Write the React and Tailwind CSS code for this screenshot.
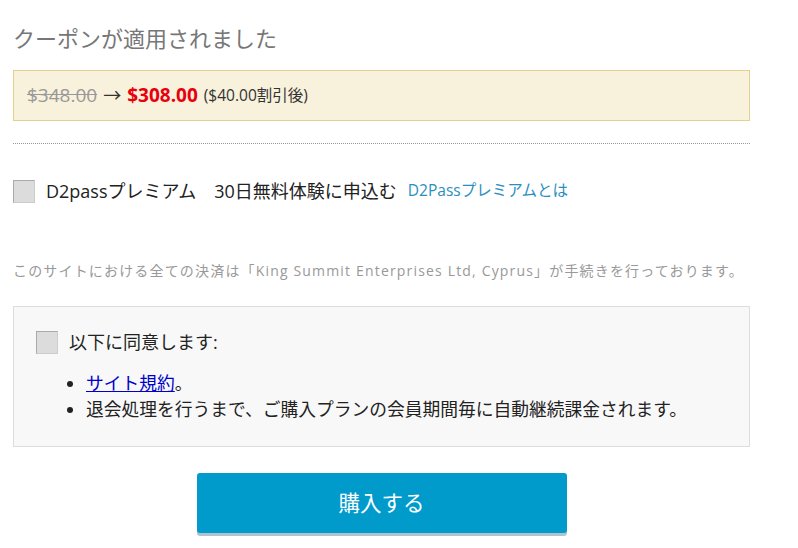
export default function App() {
  const font = { fontFamily: '"Open Sans", "Noto Sans CJK JP", sans-serif' };
  return (
    <div className="w-[798px] h-[548px] bg-white overflow-hidden" style={font}>
      <div className="ml-[13px] w-[737px] pt-[22px]">
        <h2 className="text-[22px] leading-[32px] text-[#777]">クーポンが適用されました</h2>
        <div className="mt-[16px] h-[51px] border border-[#e3d18f] bg-[#f8f1dc] flex items-center px-[13px]">
          <span className="text-[19px] text-[#999] line-through">$348.00</span>
          <span className="text-[18px] text-[#333] mx-[6px]">→</span>
          <span className="text-[19px] font-bold text-[#e8000c]">$308.00</span>
          <span className="ml-[6px] text-[15.5px] text-[#333]">($40.00割引後)</span>
        </div>
        <div className="mt-[22px] border-t border-dotted border-[#999]"></div>
        <div className="mt-[35px] flex items-center h-[24px]">
          <span className="w-[22px] h-[23px] bg-[#dcdcdc] border border-[#aaa] border-r-[#ccc] border-b-[#ccc]"></span>
          <span className="ml-[11px] text-[18px] text-[#222]">D2passプレミアム　30日無料体験に申込む</span>
          <a className="ml-[11px] text-[15.5px] text-[#2a8fc0]">D2Passプレミアムとは</a>
        </div>
        <p className="mt-[58px] text-[14px] leading-[20px] text-[#999] whitespace-nowrap tracking-[1.17px]">
          このサイトにおける全ての決済は「King Summit Enterprises Ltd, Cyprus」が手続きを行っております。
        </p>
        <div className="mt-[25px] h-[141px] border border-[#ddd] bg-[#f8f8f8] pl-[22px] pt-[22px]">
          <div className="flex items-center">
            <span className="w-[22px] h-[23px] bg-[#dcdcdc] border border-[#aaa] border-r-[#ccc] border-b-[#ccc]"></span>
            <span className="ml-[11px] text-[18px] text-[#222]">以下に同意します:</span>
          </div>
          <ul className="mt-[14px] ml-[50px] list-disc text-[17.75px] leading-[26px] text-[#222]">
            <li><a className="text-[#0000cc] underline">サイト規約</a>。</li>
            <li>退会処理を行うまで、ご購入プランの会員期間毎に自動継続課金されます。</li>
          </ul>
        </div>
        <div className="mt-[26px] flex justify-center">
          <button className="w-[370px] h-[60px] rounded-[3px] bg-[#009bcb] text-white text-[21.5px] shadow-[0_3px_0_#b0c4d0]">
            購入する
          </button>
        </div>
      </div>
    </div>
  );
}
